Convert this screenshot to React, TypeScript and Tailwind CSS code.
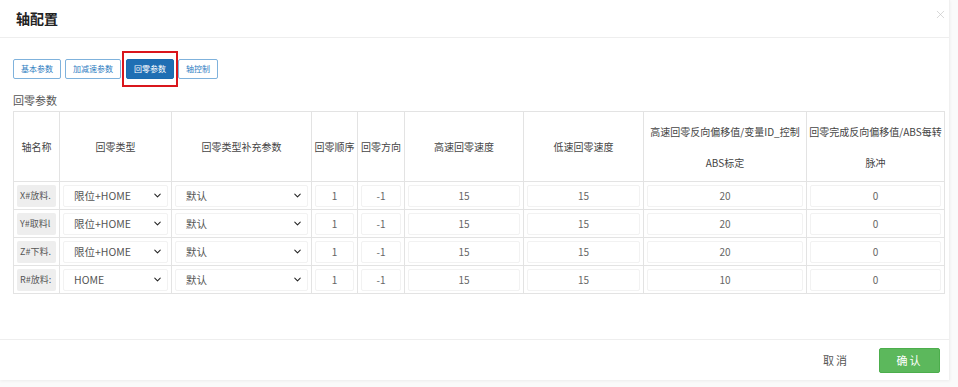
import { ChevronDown, X } from "lucide-react";

const font = { fontFamily: '"Noto Sans CJK SC", "Noto Sans", sans-serif' };

const tabs = ["基本参数", "加减速参数", "回零参数", "轴控制"];

const rows = [
  { name: "X#放料.", type: "限位+HOME", high: 15, low: 15, offset: 20 },
  { name: "Y#取料l", type: "限位+HOME", high: 15, low: 15, offset: 20 },
  { name: "Z#下料.", type: "限位+HOME", high: 15, low: 15, offset: 20 },
  { name: "R#放料:", type: "HOME", high: 15, low: 15, offset: 10 },
];

const widths = [46, 112, 140, 46, 47, 119, 120, 163, 138];

function Box({ children }: { children: React.ReactNode }) {
  return (
    <div className="flex h-[22px] items-center justify-center rounded-[2px] border border-[#f2f2f2] bg-white text-[10px] text-[#666]">
      {children}
    </div>
  );
}

function Select({ value }: { value: string }) {
  return (
    <div className="flex h-[22px] items-center justify-between rounded-[2px] border border-[#f2f2f2] bg-white pl-[10px] pr-[4px] text-[10.5px] text-[#555]">
      <span>{value}</span>
      <ChevronDown size={11} strokeWidth={2.2} className="text-[#222]" />
    </div>
  );
}

export default function App() {
  return (
    <div className="h-[387px] w-[958px] overflow-hidden bg-[#fafafa]" style={font}>
      <div className="flex h-[380px] w-[950px] flex-col border-r border-[#f0f0f0] bg-white shadow-[0_1px_3px_rgba(0,0,0,0.06)]">
        <div className="flex h-[38px] items-center justify-between border-b border-[#eeeeee] pl-[16px] pr-[2px]">
          <div className="text-[14px] font-bold text-[#222]">轴配置</div>
          <X size={13} strokeWidth={1.2} className="-mt-[9px] text-[#c4c4c4]" />
        </div>

        <div className="flex-1 px-[13px]">
          <div className="mt-[21px] flex items-center gap-[4px]">
            {tabs.map((t, i) =>
              i === 2 ? (
                <div key={t} className="relative ml-[1px]">
                  <div className="flex h-[20px] items-center rounded-[2px] border border-[#1b6bb0] bg-[#1f6fb4] px-[7px] text-[8px] text-white">
                    {t}
                  </div>
                  <div className="absolute -inset-x-[4px] -inset-y-[8px] border-2 border-[#d9161c]" />
                </div>
              ) : (
                <div
                  key={t}
                  className="flex h-[20px] items-center rounded-[2px] border border-[#7fb2dc] bg-white px-[7px] text-[8px] text-[#2d7cbf]"
                >
                  {t}
                </div>
              )
            )}
          </div>

          <div className="mt-[13px] text-[11px] leading-[16px] text-[#555]">回零参数</div>

          <table className="mt-[3px] w-[931px] table-fixed border-collapse">
            <colgroup>
              {widths.map((w, i) => (
                <col key={i} style={{ width: w }} />
              ))}
            </colgroup>
            <thead>
              <tr className="h-[70px] whitespace-nowrap text-[10px] text-[#444]">
                <th className="border border-[#e3e3e3] p-0 font-normal">轴名称</th>
                <th className="border border-[#e3e3e3] p-0 font-normal">回零类型</th>
                <th className="border border-[#e3e3e3] p-0 font-normal">回零类型补充参数</th>
                <th className="border border-[#e3e3e3] p-0 font-normal">回零顺序</th>
                <th className="border border-[#e3e3e3] p-0 font-normal">回零方向</th>
                <th className="border border-[#e3e3e3] p-0 font-normal">高速回零速度</th>
                <th className="border border-[#e3e3e3] p-0 font-normal">低速回零速度</th>
                <th className="border border-[#e3e3e3] p-0 font-normal leading-[31px]">
                  高速回零反向偏移值/变量ID_控制
                  <br />
                  ABS标定
                </th>
                <th className="border border-[#e3e3e3] p-0 font-normal leading-[31px]">
                  回零完成反向偏移值/ABS每转
                  <br />
                  脉冲
                </th>
              </tr>
            </thead>
            <tbody>
              {rows.map((r) => (
                <tr key={r.name} className="h-[28px]">
                  <td className="border border-[#e3e3e3] px-[3px]">
                    <div className="flex h-[22px] items-center overflow-hidden whitespace-nowrap rounded-[2px] bg-[#eeeeee] px-[3px] text-[9px] text-[#555]">
                      {r.name}
                    </div>
                  </td>
                  <td className="border border-[#e3e3e3] px-[3px]">
                    <Select value={r.type} />
                  </td>
                  <td className="border border-[#e3e3e3] px-[3px]">
                    <Select value="默认" />
                  </td>
                  <td className="border border-[#e3e3e3] px-[3px]">
                    <Box>1</Box>
                  </td>
                  <td className="border border-[#e3e3e3] px-[3px]">
                    <Box>-1</Box>
                  </td>
                  <td className="border border-[#e3e3e3] px-[3px]">
                    <Box>{r.high}</Box>
                  </td>
                  <td className="border border-[#e3e3e3] px-[3px]">
                    <Box>{r.low}</Box>
                  </td>
                  <td className="border border-[#e3e3e3] px-[3px]">
                    <Box>{r.offset}</Box>
                  </td>
                  <td className="border border-[#e3e3e3] px-[3px]">
                    <Box>0</Box>
                  </td>
                </tr>
              ))}
            </tbody>
          </table>
        </div>

        <div className="flex h-[41px] items-center justify-end gap-[30px] border-t border-[#eeeeee] pr-[9px]">
          <span className="text-[11px] tracking-[2px] text-[#555]">取消</span>
          <button
            type="button"
            className="h-[25px] w-[61px] rounded-[2px] border border-[#4cae4c] bg-[#5cb85c] text-[11px] tracking-[2px] text-white"
          >
            确认
          </button>
        </div>
      </div>
    </div>
  );
}
